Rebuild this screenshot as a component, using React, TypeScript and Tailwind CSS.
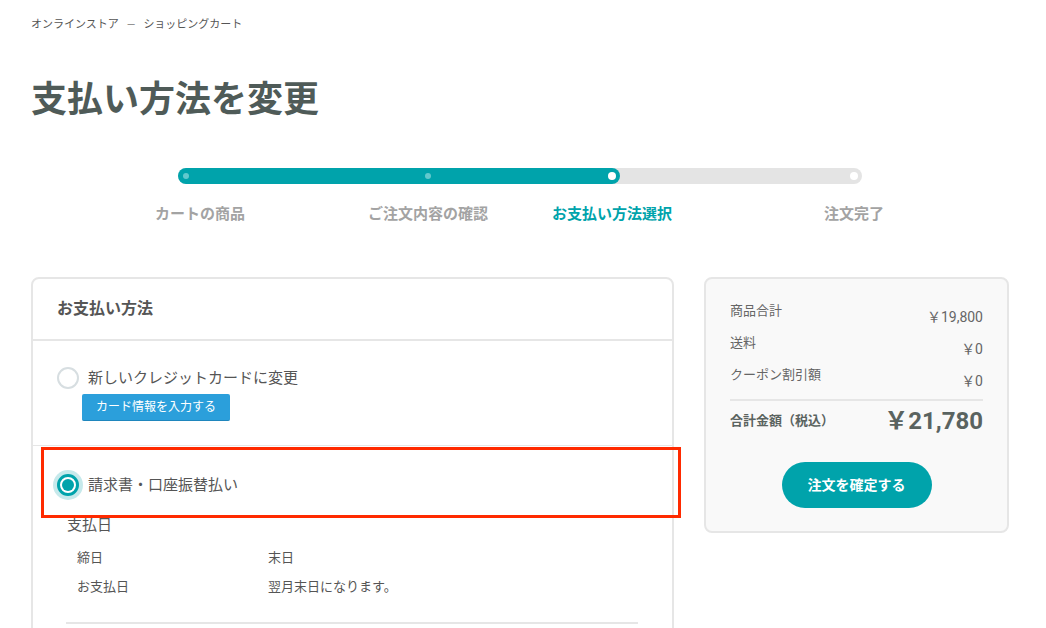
const font = "font-['Roboto','Noto_Sans_CJK_JP',sans-serif]";

const steps = [
  { label: "カートの商品", left: "ml-[99px]", active: false },
  { label: "ご注文内容の確認", left: "ml-[88px]", active: false },
  { label: "お支払い方法選択", left: "ml-[44px]", active: true },
  { label: "注文完了", left: "ml-[102px]", active: false },
];

const summary = [
  { label: "商品合計", value: "￥19,800" },
  { label: "送料", value: "￥0" },
  { label: "クーポン割引額", value: "￥0" },
];

const Radio = ({ checked }: { checked?: boolean }) =>
  checked ? (
    <div className="w-[22px] h-[22px] rounded-full border-[3px] border-[#00a3ab] bg-white ring-4 ring-[#c6e9eb] flex items-center justify-center shrink-0">
      <div className="w-[12px] h-[12px] rounded-full bg-[#00a3ab]"></div>
    </div>
  ) : (
    <div className="w-[22px] h-[22px] rounded-full border-2 border-[#d7dee1] bg-white shrink-0"></div>
  );

export default function App() {
  return (
    <div className={`w-[1046px] h-[628px] overflow-hidden bg-white relative ${font}`}>
      <div className="px-[31px] pt-[19px]">
        {/* breadcrumb */}
        <div className="text-[11px] leading-[12px] text-[#555] flex items-center">
          <span>オンラインストア</span>
          <span className="mx-[8px] text-[#888]">—</span>
          <span>ショッピングカート</span>
        </div>

        <h1 className="mt-[47px] text-[36px] leading-[44px] font-bold text-[#4f5b58]">
          支払い方法を変更
        </h1>

        {/* progress */}
        <div className="mt-[46px] ml-[147px] w-[684px] h-[16px] rounded-full bg-[#e4e4e4] relative">
          <div className="h-full w-[442px] rounded-full bg-[#00a3ab]"></div>
          <div className="absolute top-[5px] left-[5px] w-[6px] h-[6px] rounded-full bg-[#62c8cd]"></div>
          <div className="absolute top-[5px] left-[247px] w-[6px] h-[6px] rounded-full bg-[#62c8cd]"></div>
          <div className="absolute top-[4px] left-[430px] w-[8px] h-[8px] rounded-full bg-white"></div>
          <div className="absolute top-[4px] left-[672px] w-[8px] h-[8px] rounded-full bg-white"></div>
        </div>
        <div className="mt-[20px] flex">
          {steps.map((s) => (
            <div
              key={s.label}
              className={`${s.left} w-[140px] shrink-0 text-center text-[15px] leading-[20px] font-bold ${
                s.active ? "text-[#00a3ab]" : "text-[#a3a3a3]"
              }`}
            >
              {s.label}
            </div>
          ))}
        </div>

        <div className="mt-[53px] flex gap-[30px] items-start">
          {/* payment card */}
          <div className="w-[643px] h-[400px] border-2 border-[#e6e6e6] rounded-[8px] shrink-0">
            <div className="h-[62px] px-6 flex items-center border-b-2 border-[#e6e6e6]">
              <span className="text-[16px] font-bold text-[#555]">お支払い方法</span>
            </div>

            <div className="px-6 pt-[26px] pb-[24px] border-b border-[#e6e6e6]">
              <div className="flex items-center gap-[9px]">
                <Radio />
                <span className="text-[15px] leading-[22px] text-[#555]">新しいクレジットカードに変更</span>
              </div>
              <button className="mt-[5px] ml-[25px] h-[27px] px-[14px] bg-[#2b9fdb] border-b border-[#1f86bd] rounded-[2px] text-white text-[12px] leading-[26px]">
                カード情報を入力する
              </button>
            </div>

            <div className="px-6 pt-[28px]">
              <div className="flex items-center gap-[9px]">
                <Radio checked />
                <span className="text-[15px] leading-[22px] text-[#555]">請求書・口座振替払い</span>
              </div>
              <div className="mt-[18px] ml-[10px] text-[15px] leading-[22px] text-[#555]">支払日</div>
              <div className="mt-[12px] ml-[20px] grid grid-cols-[191px_1fr] gap-y-[9px] text-[13px] leading-[20px] text-[#555]">
                <span>締日</span>
                <span>末日</span>
                <span>お支払日</span>
                <span>翌月末日になります。</span>
              </div>
              <div className="mt-[25px] ml-[9px] w-[572px] border-t-2 border-[#e6e6e6]"></div>
            </div>
          </div>

          {/* summary card */}
          <div className="w-[305px] border-2 border-[#e6e6e6] rounded-[8px] bg-[#f9f9f9] px-6 pt-[22px] pb-[23px]">
            <div className="flex flex-col gap-[6px]">
              {summary.map((r) => (
                <div key={r.label} className="flex justify-between text-[#666]">
                  <span className="text-[13px] leading-[20px]">{r.label}</span>
                  <span className="mt-[6px] text-[14px] leading-[20px]">{r.value}</span>
                </div>
              ))}
            </div>
            <div className="mt-[8px] border-t-2 border-[#e6e6e6]"></div>
            <div className="mt-[5px] flex justify-between items-center text-[#5a6360]">
              <span className="text-[13px] font-bold">合計金額（税込）</span>
              <span className="text-[24px] leading-[30px] font-bold">￥21,780</span>
            </div>
            <div className="mt-[26px] flex justify-center">
              <button className="w-[150px] h-[46px] rounded-full bg-[#00a3ab] text-white text-[14px] font-bold">
                注文を確定する
              </button>
            </div>
          </div>
        </div>
      </div>

      {/* highlight annotation */}
      <div className="absolute left-[41px] top-[447px] w-[640px] h-[71px] border-[3px] border-[#ff2a00] pointer-events-none"></div>
    </div>
  );
}
